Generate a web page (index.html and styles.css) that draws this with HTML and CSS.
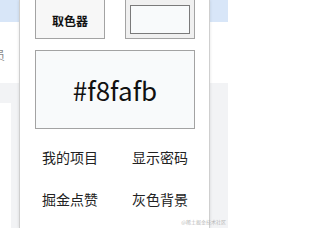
FILE: index.html
```html
<!DOCTYPE html>
<html lang="zh-CN">
<head>
<meta charset="utf-8">
<link rel="stylesheet" href="styles.css">
</head>
<body>
<div class="page">
  <div class="topbar"></div>
  <div class="hero"><span class="cut">员</span></div>
  <div class="band"></div>
  <div class="lower"><div class="card"></div></div>
</div>
<div class="panel">
  <div class="row">
    <div class="btn">取色器</div>
    <div class="swatch"><div class="swatch-inner"></div></div>
  </div>
  <div class="color-box">#f8fafb</div>
  <div class="menu">
    <div class="item">我的项目</div>
    <div class="item">显示密码</div>
    <div class="item">掘金点赞</div>
    <div class="item">灰色背景</div>
  </div>
</div>
<div class="watermark">@稀土掘金技术社区</div>
</body>
</html>
```
FILE: styles.css
```css
html, body {
  margin: 0;
  padding: 0;
  background: #fff;
}
body {
  position: relative;
  width: 228px;
  height: 228px;
  overflow: hidden;
  font-family: "Noto Sans CJK SC", "Noto Sans", sans-serif;
}
.page {
  display: flex;
  flex-direction: column;
  height: 228px;
}
.topbar {
  height: 22px;
  background: #d8e6f8;
}
.hero {
  height: 61px;
  background: #fff;
  display: flex;
  align-items: flex-start;
}
.cut {
  margin-top: 25px;
  margin-left: -7px;
  font-size: 12px;
  line-height: 16px;
  color: #8a8a8a;
}
.band {
  height: 20px;
  background: #f2f3f5;
}
.lower {
  flex: 1;
  background: #f2f3f5;
  display: flex;
}
.card {
  width: 11px;
  background: #fff;
}
.panel {
  position: absolute;
  left: 19px;
  top: 0;
  width: 160px;
  height: 228px;
  background: #fff;
  border-left: 1px solid #cfcfcf;
  border-right: 1px solid #cfcfcf;
  box-shadow: 0 0 3px rgba(0, 0, 0, 0.12);
  padding: 0 14px 0 15px;
}
.row {
  display: flex;
  gap: 20px;
  margin-top: -1px;
}
.btn {
  width: 68px;
  height: 35px;
  padding-top: 3px;
  border: 1px solid #a3a3a3;
  background: #f7f7f7;
  display: flex;
  align-items: center;
  justify-content: center;
  font-size: 12px;
  font-weight: bold;
  color: #111;
}
.swatch {
  width: 68px;
  height: 37px;
  padding-top: 1px;
  border: 1px solid #a3a3a3;
  background: #f0f0f0;
  display: flex;
  align-items: center;
  justify-content: center;
}
.swatch-inner {
  width: 58px;
  height: 27px;
  border: 1px solid #7a7a7a;
  background: #f8fafb;
}
.color-box {
  margin-top: 11px;
  height: 77px;
  border: 1px solid #a3a3a3;
  background: #f8fafb;
  display: flex;
  align-items: center;
  justify-content: center;
  font-family: "Noto Sans CJK SC", "Noto Sans", sans-serif;
  font-size: 26px;
  color: #111;
}
.menu {
  margin-top: 7px;
  display: grid;
  grid-template-columns: 70px 70px;
  column-gap: 20px;
  grid-auto-rows: 42px;
}
.item {
  display: flex;
  align-items: center;
  justify-content: center;
  font-size: 14px;
  color: #222;
  white-space: nowrap;
}
.watermark {
  position: absolute;
  right: 2px;
  bottom: 3px;
  font-size: 5px;
  line-height: 6px;
  color: #b8b8b8;
  white-space: nowrap;
}
```
